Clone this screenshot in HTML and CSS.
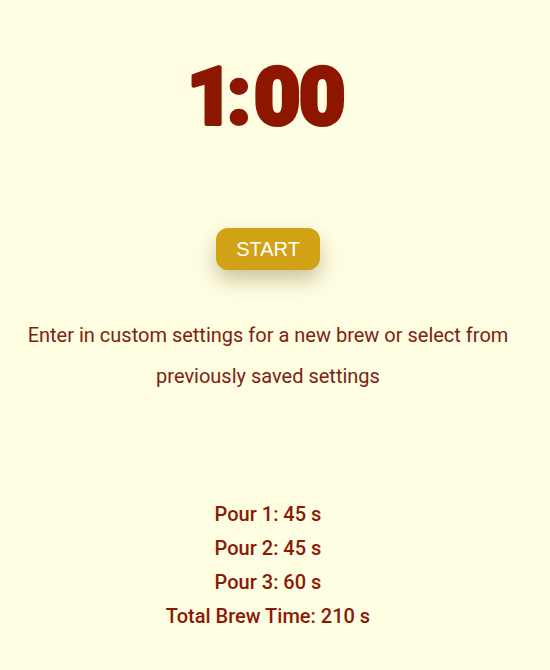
FILE: index.html
```html
<!DOCTYPE html>
<html>
<head>
<meta charset="utf-8">
<link rel="stylesheet" href="styles.css">
</head>
<body>
<main class="page">
  <svg class="timer" width="170" height="80" viewBox="0 0 170 80">
    <text class="timer-text" x="4 44 71 116" y="67">1:00</text>
  </svg>
  <button class="start">START</button>
  <p class="intro">Enter in custom settings for a new brew or select from previously saved settings</p>
  <ul class="pours">
    <li>Pour 1: 45 s</li>
    <li>Pour 2: 45 s</li>
    <li>Pour 3: 60 s</li>
    <li>Total Brew Time: 210 s</li>
  </ul>
</main>
</body>
</html>
```
FILE: styles.css
```css
html, body {
  margin: 0;
  padding: 0;
  background: #fffee3;
}
body {
  width: 550px;
  height: 670px;
  overflow: hidden;
  font-family: Roboto, "Liberation Sans", sans-serif;
}
.page {
  width: 536px;
  display: flex;
  flex-direction: column;
  align-items: center;
}
.timer {
  display: block;
  margin-top: 57px;
  overflow: visible;
}
.timer-text {
  font-family: Roboto, "Liberation Sans", sans-serif;
  font-size: 80px;
  font-weight: 900;
  fill: #8d1600;
  stroke: #8d1600;
  stroke-width: 4px;
  stroke-linejoin: round;
  stroke-linecap: round;
}
.start {
  margin-top: 91px;
  width: 104px;
  height: 42px;
  border: none;
  border-radius: 12px;
  background: #d1a116;
  color: #ffffff;
  font-family: "Liberation Sans", Arial, sans-serif;
  font-size: 20px;
  box-shadow: 0 10px 20px rgba(110, 90, 30, 0.35);
  padding: 0;
}
.intro {
  margin: 45px 0 0;
  padding: 0 20px;
  font-size: 20px;
  line-height: 41px;
  color: #7c2310;
  text-align: center;
}
.pours {
  list-style: none;
  margin: 100px 0 0;
  padding: 0;
  text-align: center;
  font-size: 20px;
  font-weight: 500;
  line-height: 34px;
  color: #8b1a05;
}
```
